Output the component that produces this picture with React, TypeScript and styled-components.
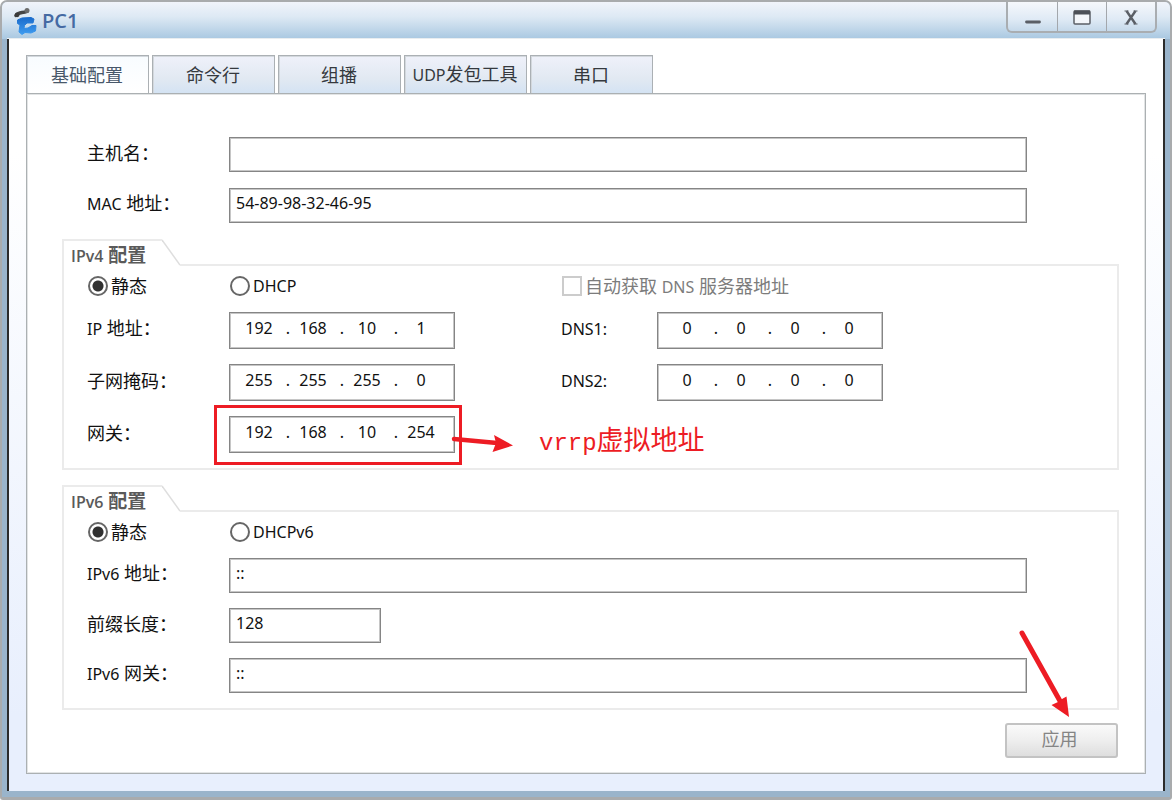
import React from 'react';
import styled, { createGlobalStyle } from 'styled-components';

const GlobalStyle = createGlobalStyle`
  *, *::before, *::after { box-sizing: border-box; }
  body {
    margin: 0;
    background: #ffffff;
    font-family: "Noto Sans", "Noto Sans CJK SC", sans-serif;
    font-size: 18px;
    line-height: 24px;
    color: #111111;
  }
  input, button { font: inherit; color: inherit; }
`;

const Window = styled.div`
  min-height: 100vh;
  display: flex;
  flex-direction: column;
  border: 2px solid #a9abad;
  border-bottom-width: 3px;
  border-radius: 7px 7px 3px 3px;
  background: #9ab4cb;
  overflow: hidden;
`;

const TitleBar = styled.header`
  height: 37px;
  flex: none;
  display: flex;
  align-items: flex-start;
  justify-content: space-between;
  padding: 0 13px 0 12px;
  background: linear-gradient(#f1f4fb 0%, #dde9f4 40%, #a9c8e1 100%);
`;

const TitleText = styled.h1`
  margin: 0;
  height: 37px;
  display: flex;
  align-items: center;
  gap: 5px;
  font-family: "Open Sans", sans-serif;
  font-size: 20px;
  font-weight: 600;
  color: #456aa3;
`;

const WindowButtons = styled.div`
  display: flex;
  height: 31px;
  border: 2px solid #a9adb1;
  border-top: 0;
  border-radius: 0 0 6px 6px;
  background: linear-gradient(#f6f8fc, #dfeaf5 60%, #c5d9ea);
`;

const WindowButton = styled.button`
  width: 49px;
  padding: 0;
  border: 0;
  background: none;
  display: flex;
  align-items: center;
  justify-content: center;
  & + & { border-left: 1px solid #a3a7ac; }
`;

const Body = styled.main`
  flex: 1;
  display: flex;
  flex-direction: column;
  margin: 0 5px 6px;
  padding: 16px 17px 17px;
  border: solid #2b2b2b;
  border-width: 0 2px;
  background: linear-gradient(#ffffff 15%, #e8effd 90%);
  box-shadow: 0 -1px 0 #e9edf0;
`;

const TabList = styled.div`
  display: flex;
  gap: 3px;
`;

const Tab = styled.button<{ $active?: boolean }>`
  width: 123px;
  height: 38px;
  padding: 0 1px 0 0;
  border: 1px solid #abb0b4;
  border-bottom: 0;
  box-shadow: inset 1px 1px 0 #d3d8dd;
  color: ${(p) => (p.$active ? '#48586a' : '#35393e')};
  background: ${(p) =>
    p.$active ? 'linear-gradient(#f8fcff, #ffffff)' : 'linear-gradient(#eff1fa, #e2e9f2 60%, #d4e3f3)'};
`;

const Latin = styled.span`
  font-size: 16px;
`;

const Panel = styled.div`
  flex: 1;
  padding: 43px 26px 14px 35px;
  border: 1px solid #abb0b2;
  box-shadow: inset 0 0 0 1px #e2e4e5;
  background: #ffffff;
`;

const Rows = styled.div`
  display: grid;
  gap: 16px;
  padding: 0 92px 16px 25px;
`;

const Row = styled.div`
  display: grid;
  grid-template-columns: 142px 1fr;
  align-items: center;
`;

const WideRow = styled(Row)`
  grid-template-columns: 142px 332px 96px 1fr;
`;

const Label = styled.label`
  padding-bottom: 4px;
  white-space: nowrap;
`;

const TextField = styled.input<{ $short?: boolean }>`
  width: ${(p) => (p.$short ? '152px' : '100%')};
  height: 35px;
  padding: 0 6px 6px;
  border: 1px solid #858585;
  border-radius: 0;
  box-shadow: inset 0 0 0 1px #c6c6c6;
  background: #ffffff;
  font-size: 16px;
`;

const Group = styled.section`
  & + & { margin-top: 15px; }
`;

const GroupHead = styled.div`
  display: flex;
  height: 27px;
`;

const GroupTitle = styled.h2`
  margin: 0;
  width: 100px;
  padding: 2px 0 0 7px;
  border: solid #ebebeb;
  border-width: 2px 0 0 2px;
  font-family: "Open Sans", "Noto Sans CJK SC", sans-serif;
  font-size: 19px;
  font-weight: 700;
  color: #5a5a5a;
  white-space: nowrap;
  ${Latin} { font-weight: 600; }
`;

const GroupRule = styled.div`
  flex: 1;
  border-bottom: 2px solid #ebebeb;
`;

const GroupBody = styled.div`
  display: grid;
  gap: 15px;
  padding: 9px 90px 15px 23px;
  border: 2px solid #ebebeb;
  border-top: 0;
`;

const Choice = styled.label<{ $disabled?: boolean }>`
  display: flex;
  align-items: center;
  gap: 3px;
  height: 22px;
  white-space: nowrap;
  color: ${(p) => (p.$disabled ? '#7c7c7c' : 'inherit')};
`;

const Radio = styled.input`
  appearance: none;
  flex: none;
  margin: 0 0 0 1px;
  width: 20px;
  height: 20px;
  border: 2px solid #666666;
  border-radius: 50%;
  background: #ffffff;
  &:checked {
    background: radial-gradient(circle, #303030 5px, #ffffff 6px);
  }
`;

const Checkbox = styled.input`
  appearance: none;
  flex: none;
  margin: 0 0 0 1px;
  width: 20px;
  height: 20px;
  border: 2px solid #cccccc;
  background: #ffffff;
`;

const FieldAnchor = styled.div`
  position: relative;
  width: 226px;
`;

const AddressBox = styled.div`
  display: flex;
  align-items: center;
  width: 226px;
  height: 37px;
  padding: 0 9px 6px;
  border: 1px solid #858585;
  box-shadow: inset 0 0 0 1px #c6c6c6;
  background: #ffffff;
  font-size: 16px;
`;

const Octet = styled.input`
  width: 40px;
  padding: 0;
  border: 0;
  background: none;
  text-align: center;
`;

const Dot = styled.span`
  width: 14px;
  padding-left: 4px;
  text-align: center;
`;

const Highlight = styled.div`
  position: absolute;
  top: -11px;
  left: -15px;
  right: -7px;
  bottom: -12px;
  border: 3px solid #ed1c24;
  pointer-events: none;
`;

const Note = styled.div`
  position: absolute;
  top: 10px;
  left: 222px;
  display: flex;
  align-items: center;
  gap: 26px;
  font-size: 27px;
  line-height: 28px;
  color: #ed1c24;
  white-space: nowrap;
  pointer-events: none;
`;

const NoteLatin = styled.span`
  font-family: "Liberation Mono", monospace;
  font-size: 24px;
`;

const Footer = styled.footer`
  display: flex;
  justify-content: flex-end;
  padding: 13px 1px 0 0;
`;

const ApplyAnchor = styled.div`
  position: relative;
`;

const ApplyButton = styled.button`
  display: block;
  width: 113px;
  height: 35px;
  padding: 0 4px 4px 0;
  border: 2px solid #c3c3c3;
  border-radius: 3px;
  background: linear-gradient(#fafafa, #eeeeee 50%, #dedede);
  color: #858585;
`;

const ApplyArrow = styled.svg`
  position: absolute;
  left: 12px;
  bottom: 41px;
  pointer-events: none;
`;

function Logo() {
  return (
    <svg width="23" height="28" viewBox="0 0 23 28" aria-hidden="true">
      <defs>
        <linearGradient id="logoBlue" x1="0" y1="0" x2="0" y2="1">
          <stop offset="0" stopColor="#1a6bcb" />
          <stop offset="1" stopColor="#3f9cf0" />
        </linearGradient>
      </defs>
      <path d="M2 8.500C5 4.500 8 6.500 13 4.500" fill="none" stroke="#454545" strokeWidth="3.500" strokeLinecap="round" />
      <circle cx="3.200" cy="7.800" r="2.400" fill="#3a3a3a" />
      <circle cx="13" cy="3.500" r="2.500" fill="#6b6b6b" />
      <path
        d="M3.500 13L8 11L17 10.500L20 12L19 16L13 16L10.500 18.500L10 21.500L14 21L18 18.500L22 18.500L21.500 24L17 26L11 25.500L8 27.500L5 25L6 18L3.500 16.500Z"
        fill="url(#logoBlue)"
        stroke="url(#logoBlue)"
        strokeWidth="1"
        strokeLinejoin="round"
      />
    </svg>
  );
}

function AddressField({ name, value }: { name: string; value: string[] }) {
  return (
    <AddressBox role="group" aria-label={name}>
      {value.map((part, i) => (
        <React.Fragment key={i}>
          {i > 0 && <Dot>.</Dot>}
          <Octet id={i === 0 ? name : undefined} aria-label={`${name} ${i + 1}`} defaultValue={part} />
        </React.Fragment>
      ))}
    </AddressBox>
  );
}

function GroupHeader({ id, version }: { id: string; version: string }) {
  return (
    <GroupHead>
      <GroupTitle id={id}>
        <Latin>{version}</Latin> 配置
      </GroupTitle>
      <svg width="18" height="27" viewBox="0 0 18 27" aria-hidden="true">
        <path d="M0 1L18 26" fill="none" stroke="#dedede" strokeWidth="1.5" />
      </svg>
      <GroupRule />
    </GroupHead>
  );
}

export default function App() {
  return (
    <>
      <GlobalStyle />
      <Window>
        <TitleBar>
          <TitleText>
            <Logo />
            PC1
          </TitleText>
          <WindowButtons>
            <WindowButton aria-label="最小化">
              <svg width="16" height="18" viewBox="0 0 16 18">
                <path d="M1.500 14H14.500" stroke="#5b5f66" strokeWidth="2.800" strokeLinecap="round" />
              </svg>
            </WindowButton>
            <WindowButton aria-label="最大化">
              <svg width="18" height="16" viewBox="0 0 18 16">
                <rect x="1" y="2" width="16" height="13" rx="1" fill="#f3f6fa" stroke="#5b5f66" strokeWidth="1.500" />
                <path d="M1 3.500H17" stroke="#4c5057" strokeWidth="4" />
              </svg>
            </WindowButton>
            <WindowButton aria-label="关闭">
              <svg width="14" height="16" viewBox="0 0 14 16">
                <path d="M2.5 2L11.5 15M11.5 2L2.5 15" stroke="#5b5f66" strokeWidth="2.4" />
                <path d="M0.5 2H4.5M9.5 2H13.5M0.5 15H4.5M9.5 15H13.5" stroke="#5b5f66" strokeWidth="1.2" />
              </svg>
            </WindowButton>
          </WindowButtons>
        </TitleBar>
        <Body>
          <TabList role="tablist">
            <Tab role="tab" aria-selected="true" $active>基础配置</Tab>
            <Tab role="tab">命令行</Tab>
            <Tab role="tab">组播</Tab>
            <Tab role="tab"><Latin>UDP</Latin>发包工具</Tab>
            <Tab role="tab">串口</Tab>
          </TabList>
          <Panel role="tabpanel">
            <Rows>
              <Row>
                <Label htmlFor="host">主机名：</Label>
                <TextField id="host" />
              </Row>
              <Row>
                <Label htmlFor="mac"><Latin>MAC</Latin> 地址：</Label>
                <TextField id="mac" defaultValue="54-89-98-32-46-95" />
              </Row>
            </Rows>

            <Group aria-labelledby="v4">
              <GroupHeader id="v4" version="IPv4" />
              <GroupBody>
                <WideRow>
                  <Choice><Radio type="radio" name="v4mode" defaultChecked />静态</Choice>
                  <Choice><Radio type="radio" name="v4mode" /><Latin>DHCP</Latin></Choice>
                  <Choice $disabled>
                    <Checkbox type="checkbox" disabled />
                    <span>自动获取 <Latin>DNS</Latin> 服务器地址</span>
                  </Choice>
                </WideRow>
                <WideRow>
                  <Label htmlFor="ip"><Latin>IP</Latin> 地址：</Label>
                  <AddressField name="ip" value={['192', '168', '10', '1']} />
                  <Label htmlFor="dns1"><Latin>DNS1:</Latin></Label>
                  <AddressField name="dns1" value={['0', '0', '0', '0']} />
                </WideRow>
                <WideRow>
                  <Label htmlFor="mask">子网掩码：</Label>
                  <AddressField name="mask" value={['255', '255', '255', '0']} />
                  <Label htmlFor="dns2"><Latin>DNS2:</Latin></Label>
                  <AddressField name="dns2" value={['0', '0', '0', '0']} />
                </WideRow>
                <WideRow>
                  <Label htmlFor="gateway">网关：</Label>
                  <FieldAnchor>
                    <AddressField name="gateway" value={['192', '168', '10', '254']} />
                    <Highlight />
                    <Note>
                      <svg width="62" height="28" viewBox="0 0 62 28" aria-hidden="true">
                        <path d="M3 11L46 15" stroke="#ed1c24" strokeWidth="4.500" strokeLinecap="round" />
                        <path d="M43 7L62 17.500L41.500 24L45 15Z" fill="#ed1c24" />
                      </svg>
                      <span><NoteLatin>vrrp</NoteLatin>虚拟地址</span>
                    </Note>
                  </FieldAnchor>
                </WideRow>
              </GroupBody>
            </Group>

            <Group aria-labelledby="v6">
              <GroupHeader id="v6" version="IPv6" />
              <GroupBody>
                <Row>
                  <Choice><Radio type="radio" name="v6mode" defaultChecked />静态</Choice>
                  <Choice><Radio type="radio" name="v6mode" /><Latin>DHCPv6</Latin></Choice>
                </Row>
                <Row>
                  <Label htmlFor="ip6"><Latin>IPv6</Latin> 地址：</Label>
                  <TextField id="ip6" defaultValue="::" />
                </Row>
                <Row>
                  <Label htmlFor="prefix">前缀长度：</Label>
                  <TextField id="prefix" $short defaultValue="128" />
                </Row>
                <Row>
                  <Label htmlFor="gateway6"><Latin>IPv6</Latin> 网关：</Label>
                  <TextField id="gateway6" defaultValue="::" />
                </Row>
              </GroupBody>
            </Group>

            <Footer>
              <ApplyAnchor>
                <ApplyButton>应用</ApplyButton>
                <ApplyArrow width="54" height="88" viewBox="0 0 54 88" aria-hidden="true">
                  <path d="M5 4L43 72" stroke="#ed1c24" strokeWidth="5" strokeLinecap="round" />
                  <path d="M34.500 76L41 73L45 70L49.500 67.500L52 88Z" fill="#ed1c24" />
                </ApplyArrow>
              </ApplyAnchor>
            </Footer>
          </Panel>
        </Body>
      </Window>
    </>
  );
}
